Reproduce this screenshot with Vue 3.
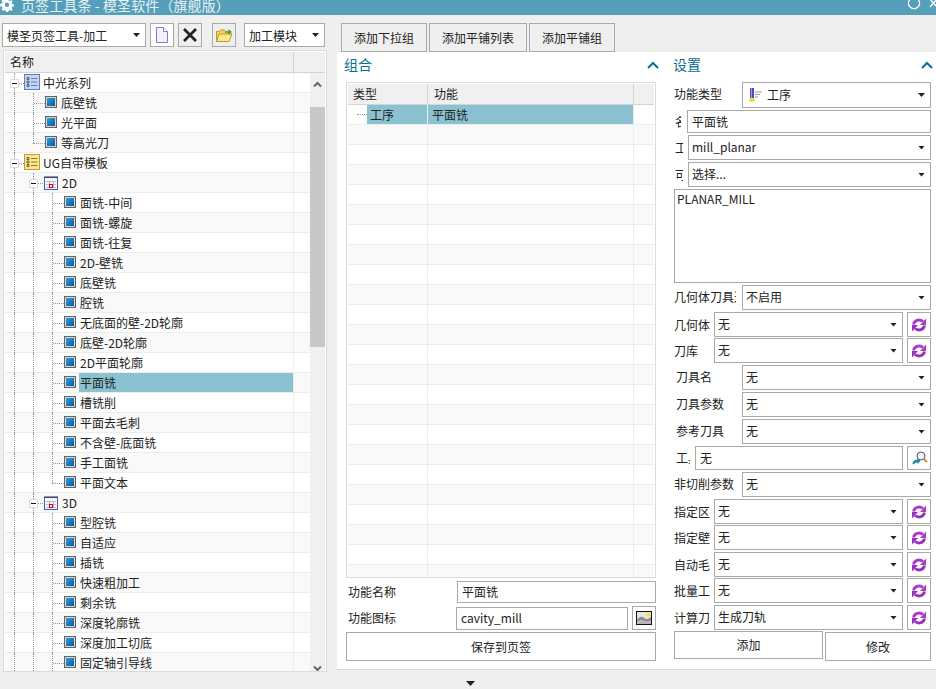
<script setup>
const L1 = (t, end) => ({ t, kind: 'leaf', depth: 2, end })
const L2 = (t, end, sel) => ({ t, kind: 'leaf', depth: 3, end, sel })
const rows = [
  { t: '中光系列', kind: 'listBlue', depth: 1, exp: true },
  L1('底壁铣'), L1('光平面'), L1('等高光刀', true),
  { t: 'UG自带模板', kind: 'listYellow', depth: 1, exp: true },
  { t: '2D', kind: 'cal', depth: 2, exp: true },
  L2('面铣-中间'), L2('面铣-螺旋'), L2('面铣-往复'), L2('2D-壁铣'), L2('底壁铣'), L2('腔铣'),
  L2('无底面的壁-2D轮廓'), L2('底壁-2D轮廓'), L2('2D平面轮廓'), L2('平面铣', false, true),
  L2('槽铣削'), L2('平面去毛刺'), L2('不含壁-底面铣'), L2('手工面铣'), L2('平面文本', true),
  { t: '3D', kind: 'cal', depth: 2, exp: true },
  L2('型腔铣'), L2('自适应'), L2('插铣'), L2('快速粗加工'), L2('剩余铣'), L2('深度轮廓铣'), L2('深度加工切底'), L2('固定轴引导线')
]
const blankRows = 23
const lower = [
  { label: '几何体', value: '无', refresh: true, tight: false },
  { label: '刀库', value: '无', refresh: true, tight: true },
  { label: '刀具名', value: '无', indent: true },
  { label: '刀具参数', value: '无', indent: true },
  { label: '参考刀具', value: '无', indent: true }
]
const lower2 = [
  { label: '指定区', value: '无', tight: false },
  { label: '指定壁', value: '无', tight: true },
  { label: '自动毛', value: '无', tight: false },
  { label: '批量工', value: '无', tight: true },
  { label: '计算刀', value: '生成刀轨', tight: false }
]
</script>

<template>
  <div class="app">
    <header class="title">
      <svg class="gear" width="14" height="14" viewBox="0 0 14 14"><path d="M7 0.5l1.2 0.2.4 1.7 1.3.6 1.5-.9 1.2 1.3-.9 1.5.5 1.3 1.8.4v1.8l-1.8.4-.5 1.3.9 1.5-1.2 1.3-1.5-.9-1.3.6-.4 1.7H6l-.4-1.7-1.3-.6-1.5.9-1.2-1.3.9-1.5-.5-1.3-1.8-.4V5.7l1.8-.4.5-1.3-.9-1.5 1.2-1.3 1.5.9 1.3-.6L5.8.7z" fill="#fff"/><circle cx="7" cy="6.8" r="2.2" fill="#559fba"/></svg>
      <span class="title-text">页签工具条 - 模圣软件（旗舰版）</span>
      <span class="spacer"></span>
      <svg class="win-ic" width="14" height="15" viewBox="0 0 14 15"><path d="M2.500 0a5.500 5.500 0 1 0 9 0" fill="none" stroke="#fff" stroke-width="1.4"/></svg>
      <svg class="win-x" width="7" height="15" viewBox="0 0 7 15"><path d="M1 -1L8 7M8 -1L1 7" fill="none" stroke="#fff" stroke-width="1.4"/></svg>
    </header>

    <div class="main">
      <aside class="left">
        <div class="toolbar">
          <div class="sel tool-sel"><span class="sel-text">模圣页签工具-加工</span><i class="arrow"></i></div>
          <button class="ic-btn new-btn">
            <svg width="14" height="16" viewBox="0 0 14 16"><path d="M1.500 .5h7l4 4v11h-11z" fill="#f2f2ff" stroke="#7c7cd8"/><path d="M8.500 .5v4h4" fill="#fff" stroke="#7c7cd8"/></svg>
          </button>
          <button class="ic-btn del-btn">
            <svg width="16" height="16" viewBox="0 0 16 16"><path d="M2 2L14 14M14 2L2 14" stroke="#222" stroke-width="2.8"/></svg>
          </button>
          <button class="ic-btn open-btn">
            <svg width="18" height="16" viewBox="0 0 18 16"><path d="M1.500 14.500V4.500h3l1-1.500h4l1 1.500h3v3" fill="#f0d060" stroke="#b99a2a"/><path d="M1.500 14.500l2.500-7.500h13l-3 7.500z" fill="#fbe98c" stroke="#b99a2a"/><path d="M10 4.500h3.500V2l3.500 3-3.500 3V5.800H10z" fill="#3fa63f"/></svg>
          </button>
          <div class="sel mod-sel"><span class="sel-text">加工模块</span><i class="arrow"></i></div>
        </div>

        <div class="tree">
          <div class="tree-head">
            <div class="th-name">名称</div>
            <div class="th-rest"></div>
          </div>
          <div class="tree-body">
            <div class="tree-rows">
              <div v-for="(r, i) in rows" :key="i" class="tr" :class="{ odd: i % 2 === 1 }">
                <div class="tc-main">
                  <span v-for="n in r.depth - 1" :key="n" class="guide"></span>
                  <span class="stub" :class="{ end: r.end, short: r.exp }">
                    <b v-if="r.exp" class="expander"></b>
                  </span>
                  <svg v-if="r.kind === 'leaf'" class="ico" width="12" height="12" viewBox="0 0 12 12">
                    <defs><linearGradient :id="'g' + i" x1="0" y1="0" x2="1" y2="1"><stop offset="0" stop-color="#2ea0dc"/><stop offset="1" stop-color="#0a5a98"/></linearGradient></defs>
                    <rect x=".6" y=".6" width="10.800" height="10.800" fill="#fff" stroke="#646464" stroke-width="1.300"/>
                    <rect x="2" y="2" width="8" height="8" :fill="'url(#g' + i + ')'"/>
                  </svg>
                  <svg v-else-if="r.kind === 'cal'" class="ico cal" width="14" height="15" viewBox="0 0 14 15">
                    <rect x=".5" y="2.500" width="13" height="12" fill="#f4f6ff" stroke="#4a5ab8"/>
                    <path d="M1 1v2M3 1v2M5 1v2M7 1v2M9 1v2M11 1v2M13 1v2" stroke="#333"/>
                    <path d="M2 6.500h10M2 9.500h10M2 12.500h10M5.500 6v7M9.500 6v7" stroke="#b5bcc4" fill="none"/>
                    <rect x="5.500" y="9.500" width="3" height="3" fill="#fff" stroke="#e00000"/>
                  </svg>
                  <svg v-else class="ico list" width="16" height="16" viewBox="0 0 16 16">
                    <rect x=".5" y=".5" width="15" height="15" :fill="r.kind === 'listBlue' ? '#c4d6f6' : '#fde68c'" :stroke="r.kind === 'listBlue' ? '#5a80cc' : '#c89a28'"/>
                    <path d="M3 3.500h2v2H3zM3 7h2v2H3zM3 10.500h2v2H3z" fill="none" stroke="#555" stroke-width=".9"/>
                    <path d="M7 4.500h6.500M7 8h6.500M7 11.500h6.500" :stroke="r.kind === 'listBlue' ? '#6a7f9f' : '#8a7a3a'"/>
                  </svg>
                  <span class="node" :class="{ selected: r.sel, 'node-list': r.depth === 1 }">{{ r.t }}</span>
                </div>
                <div class="tc-rest"></div>
              </div>
            </div>
            <div class="scrollbar">
              <svg class="sb-arrow" width="9" height="7" viewBox="0 0 9 7"><path d="M1 5.500L4.500 2 8 5.500" fill="none" stroke="#666" stroke-width="2"/></svg>
              <div class="sb-gap"></div>
              <div class="sb-thumb"></div>
              <div class="sb-fill"></div>
              <svg class="sb-arrow" width="9" height="7" viewBox="0 0 9 7"><path d="M1 1.500L4.500 5 8 1.500" fill="none" stroke="#666" stroke-width="2"/></svg>
            </div>
          </div>
        </div>
      </aside>

      <section class="right">
        <div class="tabs">
          <button class="tab t1">添加下拉组</button>
          <button class="tab t2">添加平铺列表</button>
          <button class="tab t3">添加平铺组</button>
        </div>
        <div class="panel">
          <div class="col-combo">
            <div class="sec-head combo-head">
              <span>组合</span>
              <svg width="12" height="8" viewBox="0 0 12 8"><path d="M1 7l5-5 5 5" fill="none" stroke="#0a6e92" stroke-width="2"/></svg>
            </div>
            <div class="grid-box">
              <div class="g-head">
                <div class="g1">类型</div>
                <div class="g2">功能</div>
                <div class="g3"></div>
              </div>
              <div class="g-row first">
                <div class="g1"><i class="g-dots"></i><span class="g-sel">工序</span></div>
                <div class="g2 g-sel2">平面铣</div>
                <div class="g3"></div>
              </div>
              <div v-for="n in blankRows" :key="n" class="g-row" :class="{ odd: n % 2 === 1 }">
                <div class="g1"></div><div class="g2"></div><div class="g3"></div>
              </div>
            </div>
            <div class="form-row r-name">
              <label>功能名称</label>
              <div class="inp name-inp">平面铣</div>
            </div>
            <div class="form-row r-icon">
              <label>功能图标</label>
              <div class="inp icon-inp">cavity_mill</div>
              <button class="ic-btn pic-btn">
                <svg width="16" height="14" viewBox="0 0 16 14"><rect x=".5" y=".5" width="15" height="13" fill="#e4e4e4" stroke="#111"/><path d="M1 9c3-4 5-4 7-2s5 1 7-1v3c-2 2-5 2-7 1s-4-1-7 1z" fill="#8a8a8a"/><path d="M1 12c3-3 6-3 8-2s4 1 6-1v4H1z" fill="#b5b5b5"/><circle cx="12.500" cy="3.500" r="1.800" fill="#ffe600"/></svg>
              </button>
            </div>
            <button class="btn save">保存到页签</button>
          </div>

          <div class="col-set">
            <div class="sec-head set-head">
              <span>设置</span>
              <svg width="12" height="8" viewBox="0 0 12 8"><path d="M1 7l5-5 5 5" fill="none" stroke="#0a6e92" stroke-width="2"/></svg>
            </div>
            <div class="s-row type-row">
              <label class="lb wide plain">功能类型</label>
              <div class="sel grow">
                <svg class="tool-ic" width="16" height="16" viewBox="0 0 16 16"><rect x="3" y="1" width="4" height="10" fill="#4a50c0"/><path d="M4.500 1v10" stroke="#9298ee"/><path d="M2 11.500h6l-1 3H3z" fill="#f5d000"/><path d="M8 5h7M8 7.500h5M8 10h3" stroke="#9a9a9a"/></svg>
                <span class="sel-text">工序</span><i class="arrow"></i>
              </div>
            </div>
            <div class="s-row r-gap2 name-row">
              <label class="lb clip c12">名称</label>
              <div class="inp grow">平面铣</div>
            </div>
            <div class="s-row r-gap2 r-25">
              <label class="lb clip c14">工序</label>
              <div class="sel grow"><span class="sel-text">mill_planar</span><i class="arrow"></i></div>
            </div>
            <div class="s-row r-gap2 r-25">
              <label class="lb clip c14">可选</label>
              <div class="sel grow"><span class="sel-text">选择...</span><i class="arrow"></i></div>
            </div>
            <div class="area">PLANAR_MILL</div>
            <div class="s-row r-gap2 r-25">
              <label class="lb wide clipw">几何体刀具过滤</label>
              <div class="sel grow"><span class="sel-text">不启用</span><i class="arrow"></i></div>
            </div>
            <div v-for="r in lower" :key="r.label" class="s-row r-25" :class="r.tight ? 'r-gap1' : 'r-gap2'">
              <label class="lb" :class="r.indent ? 'wide in2' : 'mid'">{{ r.label }}</label>
              <div class="sel grow"><span class="sel-text">{{ r.value }}</span><i class="arrow"></i></div>
              <button v-if="r.refresh" class="ic-btn ref-btn">
                <svg width="16" height="16" viewBox="0 0 16 16"><path d="M2.500 7.500C3 3.500 8.500 1.500 12 4.500" stroke="#a93cc8" stroke-width="2.800" fill="none"/><path d="M15 1.500V8H9z" fill="#a93cc8"/><path d="M13.500 8.500C13 12.500 7.500 14.500 4 11.500" stroke="#9a30bc" stroke-width="2.800" fill="none"/><path d="M1 14.500V8h6z" fill="#9a30bc"/></svg>
              </button>
            </div>
            <div class="s-row r-gap2 tool-row">
              <label class="lb clip c20">工具</label>
              <div class="inp grow">无</div>
              <button class="ic-btn ref-btn tall">
                <svg width="17" height="17" viewBox="0 0 17 17"><circle cx="10" cy="6" r="4" fill="#f0f4f8" stroke="#556"/><path d="M13 9l3 3" stroke="#c9962e" stroke-width="2"/><path d="M1.500 14c0-3 2-4.500 5-4.500V8l3 3-3 3v-1.500c-1.500 0-3 .5-3.500 2z" fill="#1f8f95"/></svg>
              </button>
            </div>
            <div class="s-row r-gap2 r-25">
              <label class="lb wide">非切削参数</label>
              <div class="sel grow"><span class="sel-text">无</span><i class="arrow"></i></div>
            </div>
            <div v-for="r in lower2" :key="r.label" class="s-row r-25" :class="r.tight ? 'r-gap1' : 'r-gap2'">
              <label class="lb mid">{{ r.label }}</label>
              <div class="sel grow"><span class="sel-text">{{ r.value }}</span><i class="arrow"></i></div>
              <button class="ic-btn ref-btn">
                <svg width="16" height="16" viewBox="0 0 16 16"><path d="M2.500 7.500C3 3.500 8.500 1.500 12 4.500" stroke="#a93cc8" stroke-width="2.800" fill="none"/><path d="M15 1.500V8H9z" fill="#a93cc8"/><path d="M13.500 8.500C13 12.500 7.500 14.500 4 11.500" stroke="#9a30bc" stroke-width="2.800" fill="none"/><path d="M1 14.500V8h6z" fill="#9a30bc"/></svg>
              </button>
            </div>
            <div class="s-actions">
              <button class="btn add">添加</button>
              <button class="btn mod">修改</button>
            </div>
          </div>
        </div>
      </section>
    </div>
    <div class="foot"><i class="foot-arrow"></i></div>
  </div>
</template>

<style>
html, body { margin: 0; height: 100%; overflow: hidden; background: #efefef; }
</style>

<style scoped>
.app {
  width: 936px; height: 689px; background: #efefef; overflow: hidden;
  display: flex; flex-direction: column;
  font: 12px/16px "Noto Sans CJK SC", "Liberation Sans", sans-serif; color: #222;
}
button { font: inherit; color: inherit; padding: 0; margin: 0; background: #fff; }

.title { height: 15px; flex: none; background: #559fba; display: flex; align-items: flex-start; overflow: hidden; color: #fff; }
.gear { margin: -2px 0 0 0; flex: none; }
.title-text { font-size: 14px; line-height: 10px; margin-left: 7px; letter-spacing: 0.1px; color: #e6f1f5; white-space: nowrap; }
.spacer { flex: 1; }
.win-ic { margin-right: 8px; }
.win-x { margin-right: 0; }

.main { display: flex; height: 654px; flex: none; }
.left { width: 337px; flex: none; padding: 8px 0 0 3px; box-sizing: border-box; }
.toolbar { display: flex; height: 24px; align-items: stretch; margin-left: -1px; }
.toolbar .sel { padding-left: 4px; }
.toolbar .sel-text { margin-top: 1px; }
.sel {
  position: relative; display: flex; align-items: center; box-sizing: border-box;
  border: 1px solid #a9a9a9; background: #fff; padding-left: 3px; white-space: nowrap; min-width: 0;
}
.sel-text { overflow: hidden; }
.s-row .sel-text { margin-top: -1px; }
.arrow { position: absolute; right: 5px; top: 50%; margin-top: -2px; width: 7px; height: 4px; background: #222; clip-path: polygon(0 0, 100% 0, 50% 100%); }
.tool-sel { width: 144px; }
.mod-sel { width: 81px; margin-left: 8px; }
.ic-btn { border: 1px solid #a9a9a9; box-sizing: border-box; display: flex; align-items: center; justify-content: center; flex: none; }
.new-btn { width: 24px; margin-left: 4px; background: #fff; }
.del-btn { width: 24px; margin-left: 4px; background: #efefef; }
.open-btn { width: 24px; margin-left: 10px; background: #efefef; }

.tree { width: 324px; margin-top: 3px; height: 622px; box-sizing: border-box; border: 1px solid #dcdcdc; padding: 1px 1px 0; overflow: hidden; background: #fff; }
.tree-head { display: flex; height: 20px; background: #f0f0f0; border-bottom: 1px solid #d4d4d4; }
.th-name { width: 289px; padding-left: 5px; box-sizing: border-box; line-height: 20px; border-right: 1px solid #d4d4d4; }
.th-rest { flex: 1; }
.tree-body { display: flex; height: 600px; overflow: hidden; }
.tree-rows { width: 305px; flex: none; overflow: hidden; }
.tr { display: flex; height: 20px; box-sizing: border-box; border-bottom: 1px solid #ededed; background: #fff; }
.tr.odd { background: #f9f9f9; }
.tc-main { width: 289px; flex: none; display: flex; align-items: stretch; padding-left: 9px; box-sizing: border-box; border-right: 1px solid #ededed; }
.tc-rest { flex: 1; }
.guide { width: 19px; flex: none; margin-bottom: -1px; border-left: 1px dotted #999; box-sizing: border-box; }
.stub { position: relative; width: 12px; flex: none; margin-bottom: -1px; box-sizing: border-box; border-left: 1px dotted #999; }
.stub::after { content: ""; position: absolute; left: 0; width: 100%; top: 10px; border-top: 1px dotted #999; }
.stub.end { border-left: 0; }
.stub.end::before { content: ""; position: absolute; left: 0; top: 0; height: 10px; border-left: 1px dotted #999; }
.stub.short { width: 10px; }
.expander { position: absolute; left: -5px; top: 6px; width: 9px; height: 9px; box-sizing: border-box; background: #fff; border: 1px solid #ddd; z-index: 1; }
.expander::after { content: ""; position: absolute; left: 1px; top: 3px; width: 5px; height: 1px; background: #111; }
.ico { align-self: center; flex: none; margin-top: -1px; }
.ico.cal { margin-left: 1px; }
.node { display: block; align-self: stretch; line-height: 19px; padding: 0 0 0 4px; flex: 1; white-space: nowrap; }
.node-list { padding-left: 3px; }
.node.selected { background: #8ac2d2; margin-left: 3px; padding-left: 1px; }

.scrollbar { width: 16px; flex: none; display: flex; flex-direction: column; align-items: center; background: #f0f0f0; height: 599px; }
.sb-arrow { flex: none; margin-top: 8px; margin-left: -1px; }
.sb-gap { height: 19px; flex: none; }
.sb-thumb { width: 100%; height: 240px; flex: none; background: #c8c8c8; }
.sb-fill { flex: 1; }

.right { flex: 1; display: flex; flex-direction: column; min-width: 0; }
.tabs { display: flex; height: 37px; box-sizing: border-box; padding: 8px 0 0 4px; gap: 2px; }
.tab { border: 1px solid #a9a9a9; background: #efefef; height: 29px; box-sizing: border-box; }
.t1 { width: 86px; }
.t2 { width: 98px; }
.t3 { width: 86px; }
.panel { height: 617px; background: #fff; display: flex; box-shadow: 0 1px 0 #d6d6d6; }
.col-combo { width: 327px; padding-left: 9px; flex: none; box-sizing: border-box; }
.sec-head { display: flex; justify-content: space-between; align-items: center; height: 30px; color: #0a6e92; font-size: 14px; box-sizing: border-box; }
.sec-head svg { margin-right: -3px; margin-top: -5px; }
.sec-head span { margin-top: -6px; }
.combo-head { width: 312px; margin-left: -2px; }
.grid-box { width: 310px; height: 496px; box-sizing: border-box; border: 1px solid #dcdcdc; padding: 1px 1px 0; overflow: hidden; }
.g-head, .g-row { display: flex; box-sizing: border-box; height: 20px; }
.g-head { background: #f0f0f0; border-bottom: 1px solid #d4d4d4; height: 21px; line-height: 20px; }
.g-row { border-bottom: 1px solid #ededed; background: #fff; }
.g-row.odd { background: #f9f9f9; }
.g1 { width: 80px; flex: none; box-sizing: border-box; border-right: 1px solid #ededed; padding-left: 5px; display: flex; align-items: stretch; }
.g2 { width: 206px; flex: none; box-sizing: border-box; border-right: 1px solid #ededed; padding-left: 6px; }
.g3 { flex: 1; }
.g-head .g1, .g-head .g2 { border-right-color: #d4d4d4; }
.g-row.first .g1 { padding-left: 9px; }
.g-dots { width: 10px; align-self: center; border-top: 1px dotted #999; flex: none; }
.g-sel { background: #8ac2d2; flex: 1; padding-left: 3px; line-height: 19px; }
.g-sel2 { background: #8ac2d2; line-height: 19px; padding-left: 4px; }
.form-row { display: flex; align-items: center; width: 310px; }
.form-row label { width: 110px; flex: none; padding-left: 2px; box-sizing: border-box; }
.r-name { margin-top: 3px; height: 22px; }
.r-name label { width: 111px; }
.r-icon { margin-top: 3px; height: 24px; }
.inp { border: 1px solid #a9a9a9; box-sizing: border-box; background: #fff; display: flex; align-items: center; padding-left: 4px; white-space: nowrap; min-width: 0; }
.name-inp { flex: 1; height: 22px; }
.icon-inp { width: 172px; height: 23px; }
.pic-btn { width: 24px; height: 24px; margin-left: 4px; }
.btn { border: 1px solid #a9a9a9; background: #fff; box-sizing: border-box; display: block; }
.save { width: 310px; height: 29px; margin-top: 2px; }

.col-set { width: 257px; margin-left: 10px; flex: none; box-sizing: border-box; }
.set-head { width: 257px; margin-left: -1px; }
.s-row { display: flex; align-items: stretch; }
.type-row { height: 26px; }
.r-25 { height: 25px; }
.name-row { height: 23px; }
.tool-row { height: 24px; }
.r-gap2 { margin-top: 2px; }
.r-gap1 { margin-top: 1px; }
.s-row .grow { flex: 1; }
.lb { flex: none; display: flex; align-items: center; overflow: hidden; white-space: nowrap; box-sizing: border-box; }
.lb.wide { padding-bottom: 2px; }
.wide { width: 68px; }
.clipw { width: 62px; margin-right: 6px; }
.mid { width: 40px; }
.plain { padding-left: 0; }
.in2 { padding-left: 2px; }
.clip { padding-left: 1px; }
.c12 { width: 7px; margin-right: 6px; }
.c14 { width: 9px; margin-right: 5px; }
.c20 { width: 16px; padding-left: 2px; margin-right: 5px; }
.area { height: 94px; margin-top: 2px; border: 1px solid #a9a9a9; box-sizing: border-box; padding: 1px 2px; line-height: 16px; }
.tool-ic { margin-right: 4px; margin-left: 1px; flex: none; }
.ref-btn { width: 24px; margin-left: 4px; background: #fff; }
.s-actions { display: flex; align-items: flex-start; margin-top: 1px; gap: 2px; }
.add { width: 149px; height: 28px; }
.mod { width: 106px; height: 29px; margin-top: 1px; }

.foot { flex: 1; position: relative; }
.foot-arrow { position: absolute; left: 466px; top: 12px; width: 9px; height: 5px; background: #222; clip-path: polygon(0 0, 100% 0, 50% 100%); }
</style>
